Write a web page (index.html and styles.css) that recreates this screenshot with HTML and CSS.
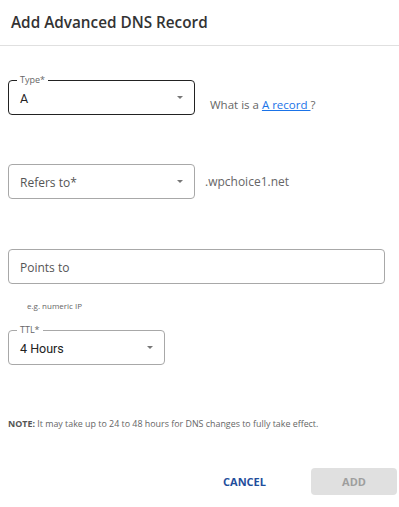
FILE: index.html
```html
<!DOCTYPE html>
<html lang="en">
<head>
    <meta charset="UTF-8">
    <meta name="viewport" content="width=device-width, initial-scale=1.0">
    <title>Add Advanced DNS Record</title>
    <link rel="stylesheet" href="styles.css">
</head>
<body>
    <div class="dialog">
        <div class="dialog-header">
            <h2>Add Advanced DNS Record</h2>
        </div>

        <div class="dialog-body">
            <div class="row row-type">
                <div class="field field-select active w-type">
                    <span class="field-label">Type*</span>
                    <span class="field-value">A</span>
                    <span class="caret"></span>
                </div>
                <span class="side-text help">What is a <a href="#">A record </a>?</span>
            </div>

            <div class="row row-refers">
                <div class="field field-select w-type">
                    <span class="field-placeholder">Refers to*</span>
                    <span class="caret"></span>
                </div>
                <span class="side-text domain">.wpchoice1.net</span>
            </div>

            <div class="row row-points">
                <div class="field w-full">
                    <span class="field-placeholder">Points to</span>
                </div>
            </div>
            <div class="hint">e.g. numeric IP</div>

            <div class="row row-ttl">
                <div class="field field-select w-ttl">
                    <span class="field-label">TTL*</span>
                    <span class="field-value">4 Hours</span>
                    <span class="caret"></span>
                </div>
            </div>

            <p class="note"><strong>NOTE:</strong> It may take up to 24 to 48 hours for DNS changes to fully take effect.</p>
        </div>

        <div class="dialog-footer">
            <button class="btn btn-text">CANCEL</button>
            <button class="btn btn-disabled" disabled>ADD</button>
        </div>
    </div>
</body>
</html>
```

FILE: styles.css
```css
body {
    margin: 0;
    font-family: "Open Sans", Arial, sans-serif;
    color: #333;
    background: #fff;
}
.dialog {
    width: 399px;
}
.dialog-header {
    height: 45px;
    border-bottom: 1px solid #e0e0e0;
    display: flex;
    align-items: center;
    padding-left: 11px;
}
.dialog-header h2 {
    margin: 0;
    font-size: 15.3px;
    font-weight: 600;
    color: #333;
    position: relative;
    top: -1px;
}
.dialog-body {
    padding: 0 8px 0 8px;
}
.row {
    display: flex;
    align-items: center;
}
.row-type {
    margin-top: 34px;
}
.row-refers {
    margin-top: 49px;
}
.row-points {
    margin-top: 50px;
}
.row-ttl {
    margin-top: 19px;
}
.field {
    position: relative;
    box-sizing: border-box;
    height: 35px;
    border: 1px solid #a8a8a8;
    border-radius: 4px;
    display: flex;
    align-items: center;
    padding: 0 11px;
}
.field.active {
    border-color: #222;
}
.w-type {
    width: 187px;
}
.w-full {
    width: 377px;
}
.w-ttl {
    width: 157px;
}
.field-label {
    position: absolute;
    left: 8px;
    top: -7px;
    padding: 0 3px;
    background: #fff;
    font-size: 9px;
    line-height: 12px;
    color: #666;
}
.field-value {
    font-family: Roboto, Arial, sans-serif;
    font-size: 12.5px;
    color: #222;
    margin-top: 2px;
}
.field-placeholder {
    font-size: 12px;
    color: #555;
    margin-top: 2px;
}
.caret {
    position: absolute;
    right: 11px;
    top: 15px;
    width: 0;
    height: 0;
    border-left: 3.5px solid transparent;
    border-right: 3.5px solid transparent;
    border-top: 3.5px solid #777;
}
.side-text {
    margin-left: 15px;
    font-size: 11.5px;
    color: #666;
}
.side-text.help {
    margin-top: 14px;
}
.side-text.domain {
    margin-left: 10px;
    font-size: 12px;
}
.help a {
    color: #1a73e8;
}
.hint {
    margin: 16px 0 0 19px;
    font-size: 8px;
    color: #666;
}
.note {
    margin: 52px 0 0 0;
    font-size: 8.9px;
    color: #666;
}
.note strong {
    color: #555;
}
.dialog-footer {
    display: flex;
    justify-content: flex-end;
    align-items: center;
    gap: 45px;
    padding: 38px 2px 0 0;
}
.btn {
    font-family: "Open Sans", Arial, sans-serif;
    font-size: 11px;
    font-weight: 700;
    border: none;
    background: none;
    cursor: pointer;
}
.btn-text {
    color: #1f4e9c;
    padding: 0;
}
.btn-disabled {
    width: 86px;
    height: 27px;
    border-radius: 4px;
    background: #e0e0e0;
    color: #9e9e9e;
    cursor: default;
}
```
